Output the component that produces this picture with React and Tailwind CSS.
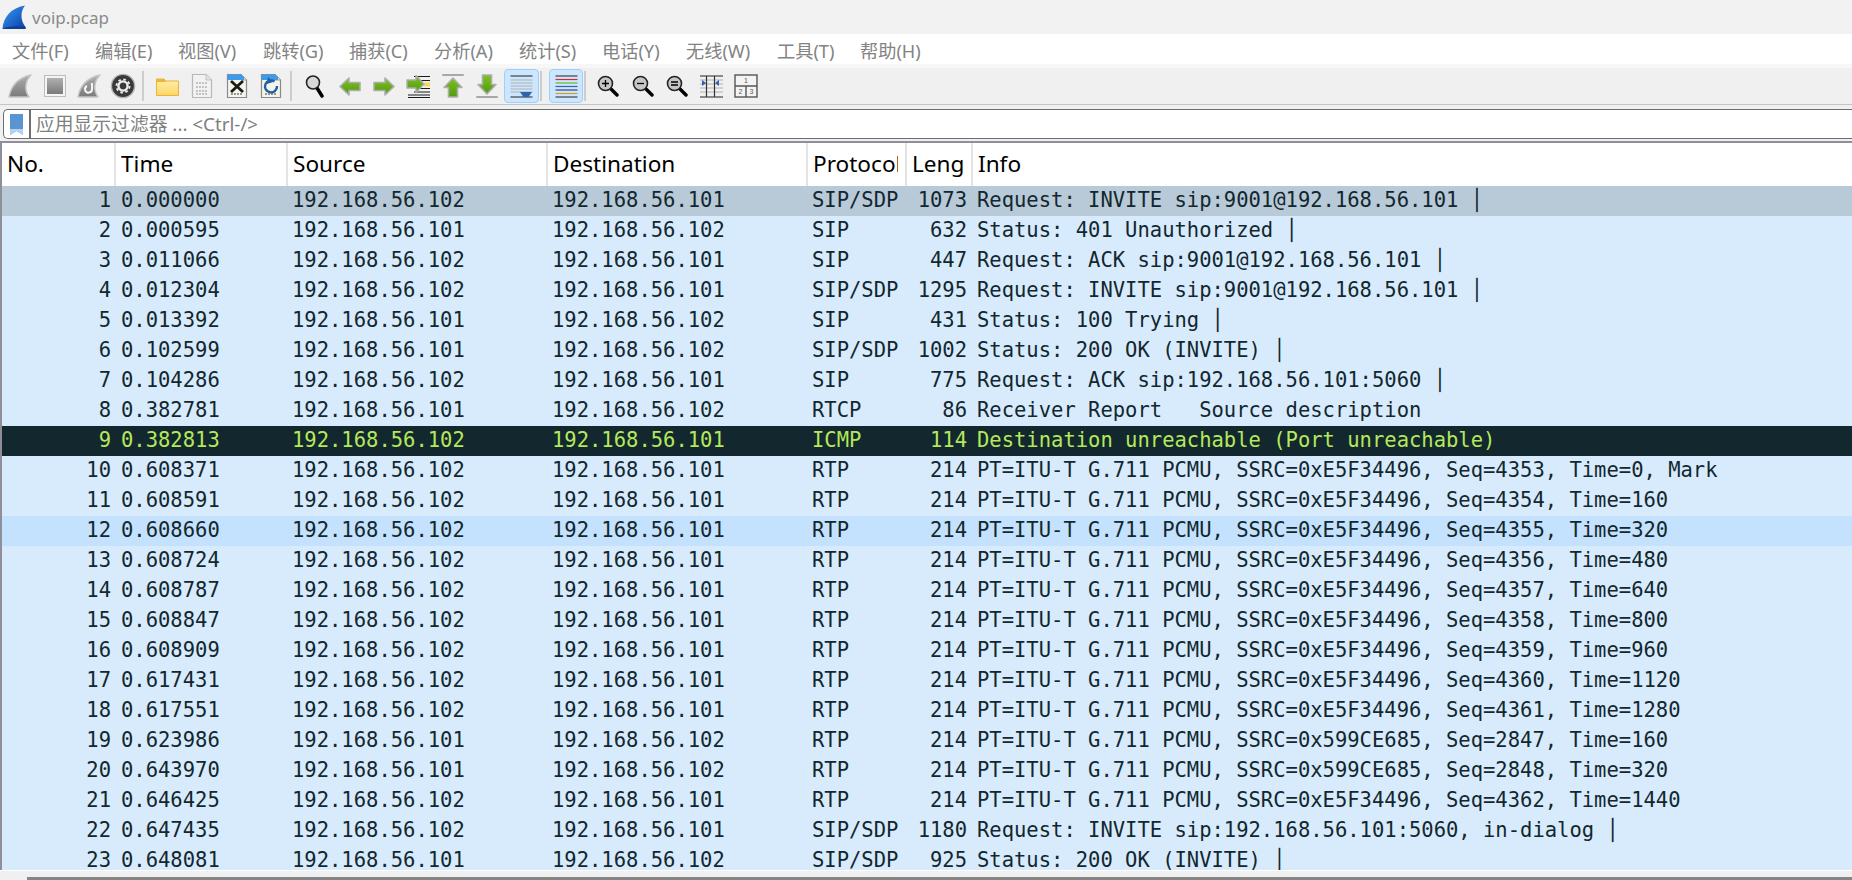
import React from 'react';

const MONO = 'font-["DejaVu_Sans_Mono","Liberation_Mono",monospace]';
const UI = 'font-["Noto_Sans","Noto_Sans_CJK_SC",sans-serif]';
const COLS = 'grid grid-cols-[114px_172px_260px_260px_99px_66px_1fr]';

const menus = [
  ['文件(F)', 'w-[83px]'], ['编辑(E)', 'w-[83px]'], ['视图(V)', 'w-[85px]'], ['跳转(G)', 'w-[86px]'],
  ['捕获(C)', 'w-[85px]'], ['分析(A)', 'w-[85px]'], ['统计(S)', 'w-[83px]'], ['电话(Y)', 'w-[84px]'],
  ['无线(W)', 'w-[91px]'], ['工具(T)', 'w-[83px]'], ['帮助(H)', 'w-[83px]'],
];

const A = '192.168.56.101';
const B = '192.168.56.102';
const rtp = (a, seq, t, mark) => `PT=ITU-T G.711 PCMU, SSRC=0x${a}, Seq=${seq}, Time=${t}${mark ? ', Mark' : ''}`;

const packets = [
  [1, '0.000000', B, A, 'SIP/SDP', 1073, 'Request: INVITE sip:9001@192.168.56.101 │'],
  [2, '0.000595', A, B, 'SIP', 632, 'Status: 401 Unauthorized │'],
  [3, '0.011066', B, A, 'SIP', 447, 'Request: ACK sip:9001@192.168.56.101 │'],
  [4, '0.012304', B, A, 'SIP/SDP', 1295, 'Request: INVITE sip:9001@192.168.56.101 │'],
  [5, '0.013392', A, B, 'SIP', 431, 'Status: 100 Trying │'],
  [6, '0.102599', A, B, 'SIP/SDP', 1002, 'Status: 200 OK (INVITE) │'],
  [7, '0.104286', B, A, 'SIP', 775, 'Request: ACK sip:192.168.56.101:5060 │'],
  [8, '0.382781', A, B, 'RTCP', 86, 'Receiver Report   Source description'],
  [9, '0.382813', B, A, 'ICMP', 114, 'Destination unreachable (Port unreachable)'],
  [10, '0.608371', B, A, 'RTP', 214, rtp('E5F34496', 4353, 0, true)],
  [11, '0.608591', B, A, 'RTP', 214, rtp('E5F34496', 4354, 160)],
  [12, '0.608660', B, A, 'RTP', 214, rtp('E5F34496', 4355, 320)],
  [13, '0.608724', B, A, 'RTP', 214, rtp('E5F34496', 4356, 480)],
  [14, '0.608787', B, A, 'RTP', 214, rtp('E5F34496', 4357, 640)],
  [15, '0.608847', B, A, 'RTP', 214, rtp('E5F34496', 4358, 800)],
  [16, '0.608909', B, A, 'RTP', 214, rtp('E5F34496', 4359, 960)],
  [17, '0.617431', B, A, 'RTP', 214, rtp('E5F34496', 4360, 1120)],
  [18, '0.617551', B, A, 'RTP', 214, rtp('E5F34496', 4361, 1280)],
  [19, '0.623986', A, B, 'RTP', 214, rtp('599CE685', 2847, 160)],
  [20, '0.643970', A, B, 'RTP', 214, rtp('599CE685', 2848, 320)],
  [21, '0.646425', B, A, 'RTP', 214, rtp('E5F34496', 4362, 1440)],
  [22, '0.647435', B, A, 'SIP/SDP', 1180, 'Request: INVITE sip:192.168.56.101:5060, in-dialog │'],
  [23, '0.648081', A, B, 'SIP/SDP', 925, 'Status: 200 OK (INVITE) │'],
];

const rowStyle = (no) => {
  if (no === 1) return 'bg-[#b8c9d8] text-[#12272e]';
  if (no === 9) return 'bg-[#12272e] text-[#b6e85c]';
  if (no === 12) return 'bg-[#c4e2fd] text-[#12272e]';
  return 'bg-[#d8ebfd] text-[#12272e]';
};

function Sep({ narrow }) {
  return (
    <div className={`${narrow ? 'w-[8px]' : 'w-[10px]'} h-[30px] flex justify-center shrink-0`}>
      <div className="w-[2px] h-full bg-[#cdcdcd] -ml-[5px]" />
    </div>
  );
}

function Tool({ children, active }) {
  return (
    <div className={`w-[34.4px] h-[34px] shrink-0 flex items-center justify-center rounded-[4px] border ${active ? 'bg-[#cce6ff] border-[#9fd0fa]' : 'border-transparent'}`}>
      {children}
    </div>
  );
}

const Icon = ({ w = 24, h = 24, children }) => (
  <svg width={w} height={h} viewBox={`0 0 ${w} ${h}`} className="shrink-0">{children}</svg>
);

const Fin = ({ fill = 'url(#finGray)', stroke = '#c4c4c4' }) => (
  <path d="M1 23 C3 12 10 4 23 1 C17 7 16 16 21 23 Z" fill={fill} stroke={stroke} strokeWidth="1.4" strokeLinejoin="round" />
);

const Arrow = ({ dir }) => {
  const paths = {
    left: 'M1 9.5 L10 1 L10 5.5 L21 5.5 L21 13.5 L10 13.5 L10 18 Z',
    right: 'M21 9.5 L12 1 L12 5.5 L1 5.5 L1 13.5 L12 13.5 L12 18 Z',
    up: 'M11 1 L2 10.5 L6.5 10.5 L6.5 20 L15.5 20 L15.5 10.5 L20 10.5 Z',
    down: 'M11 20 L2 10.5 L6.5 10.5 L6.5 1 L15.5 1 L15.5 10.5 L20 10.5 Z',
  };
  return <path d={paths[dir]} fill="url(#green)" stroke="#adadad" strokeWidth="1.6" strokeLinejoin="round" />;
};

const Lens = ({ mark }) => (
  <Icon w={22} h={24}>
    <line x1="13" y1="14" x2="20" y2="21" stroke="#000" strokeWidth="3.4" strokeLinecap="round" />
    <circle cx="8.5" cy="9.5" r="7" fill="#c6c6c6" stroke="#222" strokeWidth="1.6" />
    {mark === '+' && <path d="M5 9.5H12M8.5 6V13" stroke="#000" strokeWidth="1.3" />}
    {mark === '-' && <path d="M5 9.5H12" stroke="#000" strokeWidth="1.3" />}
    {mark === '=' && <path d="M5 8H12M5 11H12" stroke="#000" strokeWidth="1.3" />}
  </Icon>
);

const DocBase = ({ children, fill = '#f4f4ea', stroke = '#8a8a8a' }) => (
  <Icon w={22} h={26}>
    <path d="M1.5 1.5H15L20.5 7V24.5H1.5Z" fill={fill} stroke={stroke} strokeWidth="1.2" />
    <path d="M15 1.5V7H20.5" fill="#e4e4e4" stroke={stroke} strokeWidth="0.8" />
    {children}
  </Icon>
);

function Toolbar() {
  return (
    <div className="h-[37px] bg-[#f0f0f0] border-b border-[#c4c4c4] flex items-center pl-[3px] shrink-0">
      <Tool><Icon><Fin /></Icon></Tool>
      <Tool>
        <Icon>
          <rect x="1.5" y="1.5" width="21" height="21" fill="#f4f4f4" stroke="#bdbdbd" />
          <rect x="4" y="4" width="16" height="16" fill="url(#finGray)" />
        </Icon>
      </Tool>
      <Tool>
        <Icon>
          <Fin />
          <path d="M15 9 V15 A3.5 3.5 0 1 1 10 12" fill="none" stroke="#f4f4f4" strokeWidth="2" />
        </Icon>
      </Tool>
      <Tool>
        <Icon w={26} h={26}>
          <circle cx="13" cy="13" r="11.6" fill="#3a3a3a" stroke="#b4b4b4" strokeWidth="1.4" />
          <circle cx="13" cy="13" r="4.6" fill="none" stroke="#eee" strokeWidth="2.4" />
          <circle cx="13" cy="13" r="6.6" fill="none" stroke="#eee" strokeWidth="1.8" strokeDasharray="2.6 2.6" />
        </Icon>
      </Tool>
      <Sep />
      <Tool>
        <Icon w={23} h={20}>
          <path d="M0.5 3 H8 L10 5 H22.5 V19.5 H0.5Z" fill="url(#folder)" stroke="#eab33e" />
          <path d="M0.5 3 H8 L10 6 H0.5Z" fill="#f2b233" />
        </Icon>
      </Tool>
      <Tool>
        <DocBase fill="#f2f2f2" stroke="#b8b8b8">
          <path d="M5 10H17M5 14H17M5 18H17M5 21H17" stroke="#b4b4b4" strokeWidth="1.6" strokeDasharray="2 1" />
        </DocBase>
      </Tool>
      <Tool>
        <DocBase>
          <path d="M1.5 1.5H15L18 4 V7 H1.5Z" fill="#3f9be8" />
          <path d="M5 21H17" stroke="#777" strokeWidth="1.6" strokeDasharray="2 1" />
          <path d="M5 8L17 19M17 8L5 19" stroke="#1a1a1a" strokeWidth="2.8" />
        </DocBase>
      </Tool>
      <Tool>
        <DocBase>
          <path d="M1.5 1.5H15L18 4 V7 H1.5Z" fill="#3f9be8" />
          <path d="M5 21H17" stroke="#777" strokeWidth="1.6" strokeDasharray="2 1" />
          <path d="M14.5 8.5 A6 6 0 1 0 17 13" fill="none" stroke="#1f5fa8" strokeWidth="2.4" />
          <path d="M8 4 L13 9 L7 11Z" fill="#1f5fa8" />
        </DocBase>
      </Tool>
      <Sep />
      <Tool>
        <Icon w={20} h={24}>
          <line x1="12" y1="14" x2="17" y2="22" stroke="#000" strokeWidth="3.4" strokeLinecap="round" />
          <circle cx="8" cy="8.5" r="6.5" fill="#d8d8d8" stroke="#222" strokeWidth="1.6" />
        </Icon>
      </Tool>
      <Tool><Icon w={22} h={19}><Arrow dir="left" /></Icon></Tool>
      <Tool><Icon w={22} h={19}><Arrow dir="right" /></Icon></Tool>
      <Tool>
        <Icon w={24} h={24}>
          <path d="M8 2.5H24M14 6.5H24M14 14.5H24M8 18H24M2 21H24M2 23.5H24" stroke="#1a1a1a" strokeWidth="1.2" />
          <rect x="18" y="8.5" width="6" height="4" fill="#f7d95a" />
          <path d="M18 10 L10 1.5 L10 6 L1 6 L1 14 L10 14 L10 18.5 Z" fill="url(#green)" stroke="#adadad" strokeWidth="1.4" strokeLinejoin="round" />
        </Icon>
      </Tool>
      <Tool>
        <Icon w={22} h={24}>
          <rect x="0" y="0" width="22" height="2" rx="1" fill="#a8a8a8" />
          <g transform="translate(0 3)"><Arrow dir="up" /></g>
        </Icon>
      </Tool>
      <Tool>
        <Icon w={22} h={24}>
          <Arrow dir="down" />
          <rect x="0" y="22" width="22" height="2" rx="1" fill="#a8a8a8" />
        </Icon>
      </Tool>
      <Tool active>
        <Icon w={23} h={23}>
          <path d="M0.5 1H22.5M0.5 22H22.5" stroke="#222" strokeWidth="1.2" />
          <path d="M0.5 5H22.5M0.5 8H22.5M0.5 11H22.5M0.5 14H22.5M0.5 17H22.5" stroke="#b0b0b0" strokeWidth="1" />
          <path d="M10 17H22L18.5 22H13.5Z" fill="#2f64ab" />
        </Icon>
      </Tool>
      <Sep />
      <Tool active>
        <Icon w={23} h={23}>
          <path d="M0.5 1H22.5M0.5 22H22.5" stroke="#222" strokeWidth="1.2" />
          <path d="M0.5 4.5H22.5" stroke="#d42a2a" strokeWidth="1.2" />
          <path d="M0.5 8H22.5" stroke="#6ab81e" strokeWidth="1.2" />
          <path d="M0.5 11.5H22.5" stroke="#2f64ab" strokeWidth="1.2" />
          <path d="M0.5 15H22.5" stroke="#3b3b8f" strokeWidth="1.2" />
          <path d="M0.5 18.5H22.5" stroke="#d8a010" strokeWidth="1.2" />
        </Icon>
      </Tool>
      <Sep narrow />
      <Tool><Lens mark="+" /></Tool>
      <Tool><Lens mark="-" /></Tool>
      <Tool><Lens mark="=" /></Tool>
      <Tool>
        <Icon w={23} h={23}>
          <path d="M0 1H23M0 22H23" stroke="#222" strokeWidth="1.2" />
          <path d="M0 5H23M0 9H23M0 13H23M0 17H23" stroke="#b0b0b0" />
          <path d="M6.5 1V22M14.5 1V22" stroke="#333" strokeWidth="1.2" />
          <path d="M2 5L6 8L2 11Z M19 5L15 8L19 11Z" fill="#2f64ab" />
        </Icon>
      </Tool>
      <Tool>
        <Icon w={24} h={24}>
          <rect x="1" y="1" width="22" height="22" fill="#f4f4f4" stroke="#555" strokeWidth="1.4" />
          <path d="M1 12H23M12 12V23" stroke="#555" strokeWidth="1.4" />
          <text x="12" y="9" fontSize="7" textAnchor="middle" fill="#555" fontFamily="Liberation Sans">1</text>
          <text x="6.5" y="20" fontSize="7" textAnchor="middle" fill="#555" fontFamily="Liberation Sans">2</text>
          <text x="17.5" y="20" fontSize="7" textAnchor="middle" fill="#555" fontFamily="Liberation Sans">3</text>
        </Icon>
      </Tool>
    </div>
  );
}

const headers = ['No.', 'Time', 'Source', 'Destination', 'Protocol', 'Length', 'Info'];

export default function App() {
  return (
    <div className={`w-full h-screen flex flex-col overflow-hidden bg-[#f0f0f0] ${UI}`}>
      <svg width="0" height="0" className="absolute">
        <defs>
          <linearGradient id="finGray" x1="0" y1="0" x2="0" y2="1">
            <stop offset="0" stopColor="#b0b0b0" />
            <stop offset="1" stopColor="#7a7a7a" />
          </linearGradient>
          <linearGradient id="green" x1="0" y1="0" x2="0" y2="1">
            <stop offset="0" stopColor="#7fc21f" />
            <stop offset="1" stopColor="#4f9a0c" />
          </linearGradient>
          <linearGradient id="folder" x1="0" y1="0" x2="0" y2="1">
            <stop offset="0" stopColor="#fff0b0" />
            <stop offset="1" stopColor="#fdd562" />
          </linearGradient>
          <linearGradient id="logo" x1="0" y1="0" x2="1" y2="1">
            <stop offset="0" stopColor="#3b9cf5" />
            <stop offset="1" stopColor="#0a3fa8" />
          </linearGradient>
        </defs>
      </svg>

      {/* title bar */}
      <div className="h-[34px] bg-[#f2f2f2] flex items-center pl-[2px] shrink-0">
        <svg width="24" height="24" viewBox="0 0 24 24" className="shrink-0">
          <path d="M0.5 23.5 C1.5 13 8 3 23 0.5 C18.5 6 18 15 23.5 22 L23.5 23.5 Z" fill="url(#logo)" />
          <path d="M0.5 23.5 C7 21 16 20.5 23.5 22 L23.5 24 L0.5 24Z" fill="#123f8f" />
        </svg>
        <span className="ml-[6px] text-[17px] leading-none text-[#8a8a8a]">voip.pcap</span>
      </div>

      {/* menu bar */}
      <div className="h-[32px] bg-white flex items-center pl-[12px] pt-[4px] shrink-0 border-b-[2px] border-[#f7f7f7]">
        {menus.map(([label, w]) => (
          <span key={label} className={`${w} text-[18.2px] leading-none text-[#838383] shrink-0`}>{label}</span>
        ))}
      </div>

      <div className="h-[2px] bg-[#f7f7f7] shrink-0" />
      <Toolbar />

      {/* display filter */}
      <div className="h-[36px] bg-[#f0f0f0] pt-[4px] pl-[3px] shrink-0">
        <div className="h-[30px] flex items-stretch bg-white border-y border-l border-[#6e6e6e] rounded-l-[5px]">
          <div className="w-[27px] flex items-center justify-center border-r-[2px] border-[#6e6e6e]">
            <svg width="13" height="21" viewBox="0 0 13 21">
              <path d="M0 0H13V21L6.5 17L0 21Z" fill="#5b94d2" />
              <path d="M0 15H13V21L6.5 17L0 21Z" fill="#b5d3f0" />
            </svg>
          </div>
          <div className="flex items-center pl-[5px] text-[18.8px] leading-none text-[#808080]">
            应用显示过滤器 ... &lt;Ctrl-/&gt;
          </div>
        </div>
      </div>

      {/* packet list */}
      <div className="flex-1 min-h-0 overflow-hidden border-l-[2px] border-t-[2px] border-[#8f8f9a] bg-white">
        <div className={`${COLS} h-[43px] bg-white`}>
          {headers.map((h) => (
            <div key={h} className="border-r-[2px] border-[#e4e4e4] last:border-r-0 pl-[5px] pr-[7px] flex items-center text-[22.6px] leading-none text-black whitespace-nowrap">
              <span className="block overflow-hidden py-[4px]">{h}</span>
            </div>
          ))}
        </div>
        {packets.map(([no, time, src, dst, proto, len, info]) => (
          <div key={no} className={`${COLS} h-[30px] items-center ${MONO} text-[20.5px] leading-none whitespace-pre pb-[1px] ${rowStyle(no)}`}>
            <div className="text-right pr-[5px]">{no}</div>
            <div className="pl-[5px]">{time}</div>
            <div className="pl-[4px]">{src}</div>
            <div className="pl-[4px]">{dst}</div>
            <div className="pl-[4px]">{proto}</div>
            <div className="text-right pr-[6px]">{len}</div>
            <div className="pl-[4px]">{info}</div>
          </div>
        ))}
      </div>

      {/* horizontal scrollbar */}
      <div className="h-[10px] shrink-0 bg-[#f0f0f0] border-t border-white pl-[27px] pt-[6px]">
        <div className="h-[3px] bg-[#858585]" />
      </div>
    </div>
  );
}
